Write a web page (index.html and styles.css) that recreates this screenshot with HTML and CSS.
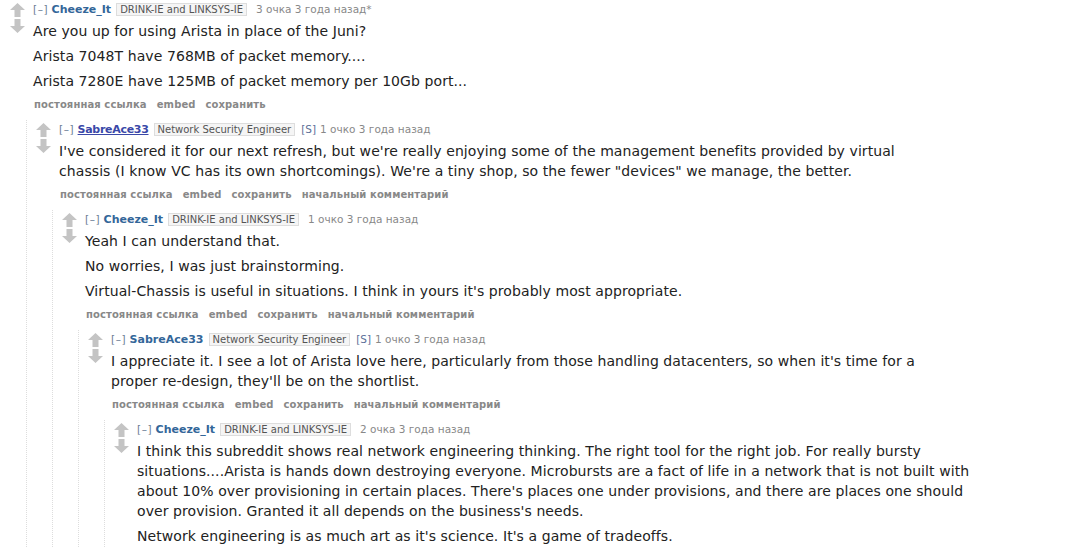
FILE: index.html
```html
<!DOCTYPE html>
<html lang="ru">
<head>
  <meta charset="UTF-8" />
  <title>Arista vs Juniper - comments</title>
  <link rel="stylesheet" href="styles.css">
</head>
<body>
  <div class="comment top">
    <div class="thing">
      <div class="midcol">
        <svg class="arrow" viewBox="0 0 15 14"><path d="M7.5 0 L15 7 L10.5 7 L10.5 14 L4.5 14 L4.5 7 L0 7 Z"/></svg>
        <svg class="arrow" viewBox="0 0 15 14"><path d="M7.5 14 L15 7 L10.5 7 L10.5 0 L4.5 0 L4.5 7 L0 7 Z"/></svg>
      </div>
      <div class="entry">
        <p class="tagline"><span class="expand">[–]</span> <a class="author">Cheeze_It</a><span class="flair">DRINK-IE and LINKSYS-IE</span><span class="score">3 очка 3 года назад*</span></p>
        <div class="md">
          <p>Are you up for using Arista in place of the Juni?</p>
          <p>Arista 7048T have 768MB of packet memory....</p>
          <p>Arista 7280E have 125MB of packet memory per 10Gb port...</p>
        </div>
        <ul class="buttons">
          <li>постоянная ссылка</li>
          <li>embed</li>
          <li>сохранить</li>
        </ul>
      </div>
    </div>

    <div class="child">
      <div class="comment">
        <div class="thing">
          <div class="midcol">
            <svg class="arrow" viewBox="0 0 15 14"><path d="M7.5 0 L15 7 L10.5 7 L10.5 14 L4.5 14 L4.5 7 L0 7 Z"/></svg>
            <svg class="arrow" viewBox="0 0 15 14"><path d="M7.5 14 L15 7 L10.5 7 L10.5 0 L4.5 0 L4.5 7 L0 7 Z"/></svg>
          </div>
          <div class="entry">
            <p class="tagline"><span class="expand">[–]</span> <a class="author visited">SabreAce33</a><span class="flair">Network Security Engineer</span><span class="op">[S]</span><span class="score">1 очко 3 года назад</span></p>
            <div class="md">
              <p>I've considered it for our next refresh, but we're really enjoying some of the management benefits provided by virtual chassis (I know VC has its own shortcomings). We're a tiny shop, so the fewer "devices" we manage, the better.</p>
            </div>
            <ul class="buttons">
              <li>постоянная ссылка</li>
              <li>embed</li>
              <li>сохранить</li>
              <li>начальный комментарий</li>
            </ul>
          </div>
        </div>

        <div class="child">
          <div class="comment">
            <div class="thing">
              <div class="midcol">
                <svg class="arrow" viewBox="0 0 15 14"><path d="M7.5 0 L15 7 L10.5 7 L10.5 14 L4.5 14 L4.5 7 L0 7 Z"/></svg>
                <svg class="arrow" viewBox="0 0 15 14"><path d="M7.5 14 L15 7 L10.5 7 L10.5 0 L4.5 0 L4.5 7 L0 7 Z"/></svg>
              </div>
              <div class="entry">
                <p class="tagline"><span class="expand">[–]</span> <a class="author">Cheeze_It</a><span class="flair">DRINK-IE and LINKSYS-IE</span><span class="score">1 очко 3 года назад</span></p>
                <div class="md">
                  <p>Yeah I can understand that.</p>
                  <p>No worries, I was just brainstorming.</p>
                  <p>Virtual-Chassis is useful in situations. I think in yours it's probably most appropriate.</p>
                </div>
                <ul class="buttons">
                  <li>постоянная ссылка</li>
                  <li>embed</li>
                  <li>сохранить</li>
                  <li>начальный комментарий</li>
                </ul>
              </div>
            </div>

            <div class="child">
              <div class="comment">
                <div class="thing">
                  <div class="midcol">
                    <svg class="arrow" viewBox="0 0 15 14"><path d="M7.5 0 L15 7 L10.5 7 L10.5 14 L4.5 14 L4.5 7 L0 7 Z"/></svg>
                    <svg class="arrow" viewBox="0 0 15 14"><path d="M7.5 14 L15 7 L10.5 7 L10.5 0 L4.5 0 L4.5 7 L0 7 Z"/></svg>
                  </div>
                  <div class="entry">
                    <p class="tagline"><span class="expand">[–]</span> <a class="author">SabreAce33</a><span class="flair">Network Security Engineer</span><span class="op">[S]</span><span class="score">1 очко 3 года назад</span></p>
                    <div class="md">
                      <p>I appreciate it. I see a lot of Arista love here, particularly from those handling datacenters, so when it's time for a proper re-design, they'll be on the shortlist.</p>
                    </div>
                    <ul class="buttons">
                      <li>постоянная ссылка</li>
                      <li>embed</li>
                      <li>сохранить</li>
                      <li>начальный комментарий</li>
                    </ul>
                  </div>
                </div>

                <div class="child">
                  <div class="comment">
                    <div class="thing">
                      <div class="midcol">
                        <svg class="arrow" viewBox="0 0 15 14"><path d="M7.5 0 L15 7 L10.5 7 L10.5 14 L4.5 14 L4.5 7 L0 7 Z"/></svg>
                        <svg class="arrow" viewBox="0 0 15 14"><path d="M7.5 14 L15 7 L10.5 7 L10.5 0 L4.5 0 L4.5 7 L0 7 Z"/></svg>
                      </div>
                      <div class="entry">
                        <p class="tagline"><span class="expand">[–]</span> <a class="author">Cheeze_It</a><span class="flair">DRINK-IE and LINKSYS-IE</span><span class="score">2 очка 3 года назад</span></p>
                        <div class="md">
                          <p>I think this subreddit shows real network engineering thinking. The right tool for the right job. For really bursty situations....Arista is hands down destroying everyone. Microbursts are a fact of life in a network that is not built with about 10% over provisioning in certain places. There's places one under provisions, and there are places one should over provision. Granted it all depends on the business's needs.</p>
                          <p>Network engineering is as much art as it's science. It's a game of tradeoffs.</p>
                        </div>
                      </div>
                    </div>
                  </div>
                </div>
              </div>
            </div>
          </div>
        </div>
      </div>
    </div>
  </div>
</body>
</html>
```

FILE: styles.css
```css
body {
  font-family: Verdana, 'DejaVu Sans', sans-serif;
  background: white;
  color: #222;
  margin: 0;
  padding: 0 0 0 1px;
}
.comment {
  padding: 3px 0 0 9px;
}
.thing {
  display: flex;
  align-items: flex-start;
}
.midcol {
  width: 15px;
  margin-right: 8px;
  display: flex;
  flex-direction: column;
  gap: 2px;
}
.arrow {
  width: 15px;
  height: 14px;
  display: block;
  fill: #c4c4c4;
}
.entry {
  flex: 1;
}
.tagline {
  font-size: 10.5px;
  line-height: 13px;
  margin: 0;
  color: #888;
  white-space: nowrap;
}
.expand {
  color: #6b7d95;
  letter-spacing: 0.6px;
}
.author {
  color: #369;
  font-weight: bold;
  font-size: 11px;
}
.author.visited {
  color: #3a48a8;
  text-decoration: underline;
  letter-spacing: -0.3px;
}
.flair {
  display: inline-block;
  font-size: 10px;
  color: #545454;
  background: #f5f5f5;
  border: 1px solid #ddd;
  padding: 0 3px;
  margin-left: 5px;
  line-height: 11px;
}
.op {
  color: #5b6f98;
  margin-left: 6px;
}
.score {
  margin-left: 9px;
}
.op + .score {
  margin-left: 4px;
}
.md {
  font-size: 14px;
  line-height: 20px;
  letter-spacing: 0.08px;
  max-width: 840px;
}
.md p {
  margin: 5px 0;
}
.buttons {
  list-style: none;
  margin: 0;
  padding: 2px 0 2px 1px;
  display: flex;
  gap: 10px;
  font-size: 10px;
  line-height: 13px;
  font-weight: bold;
  letter-spacing: 0.1px;
  color: #888;
}
.child {
  margin: 7px 0 0 16px;
  border-left: 1px dotted #ddd;
}
```
